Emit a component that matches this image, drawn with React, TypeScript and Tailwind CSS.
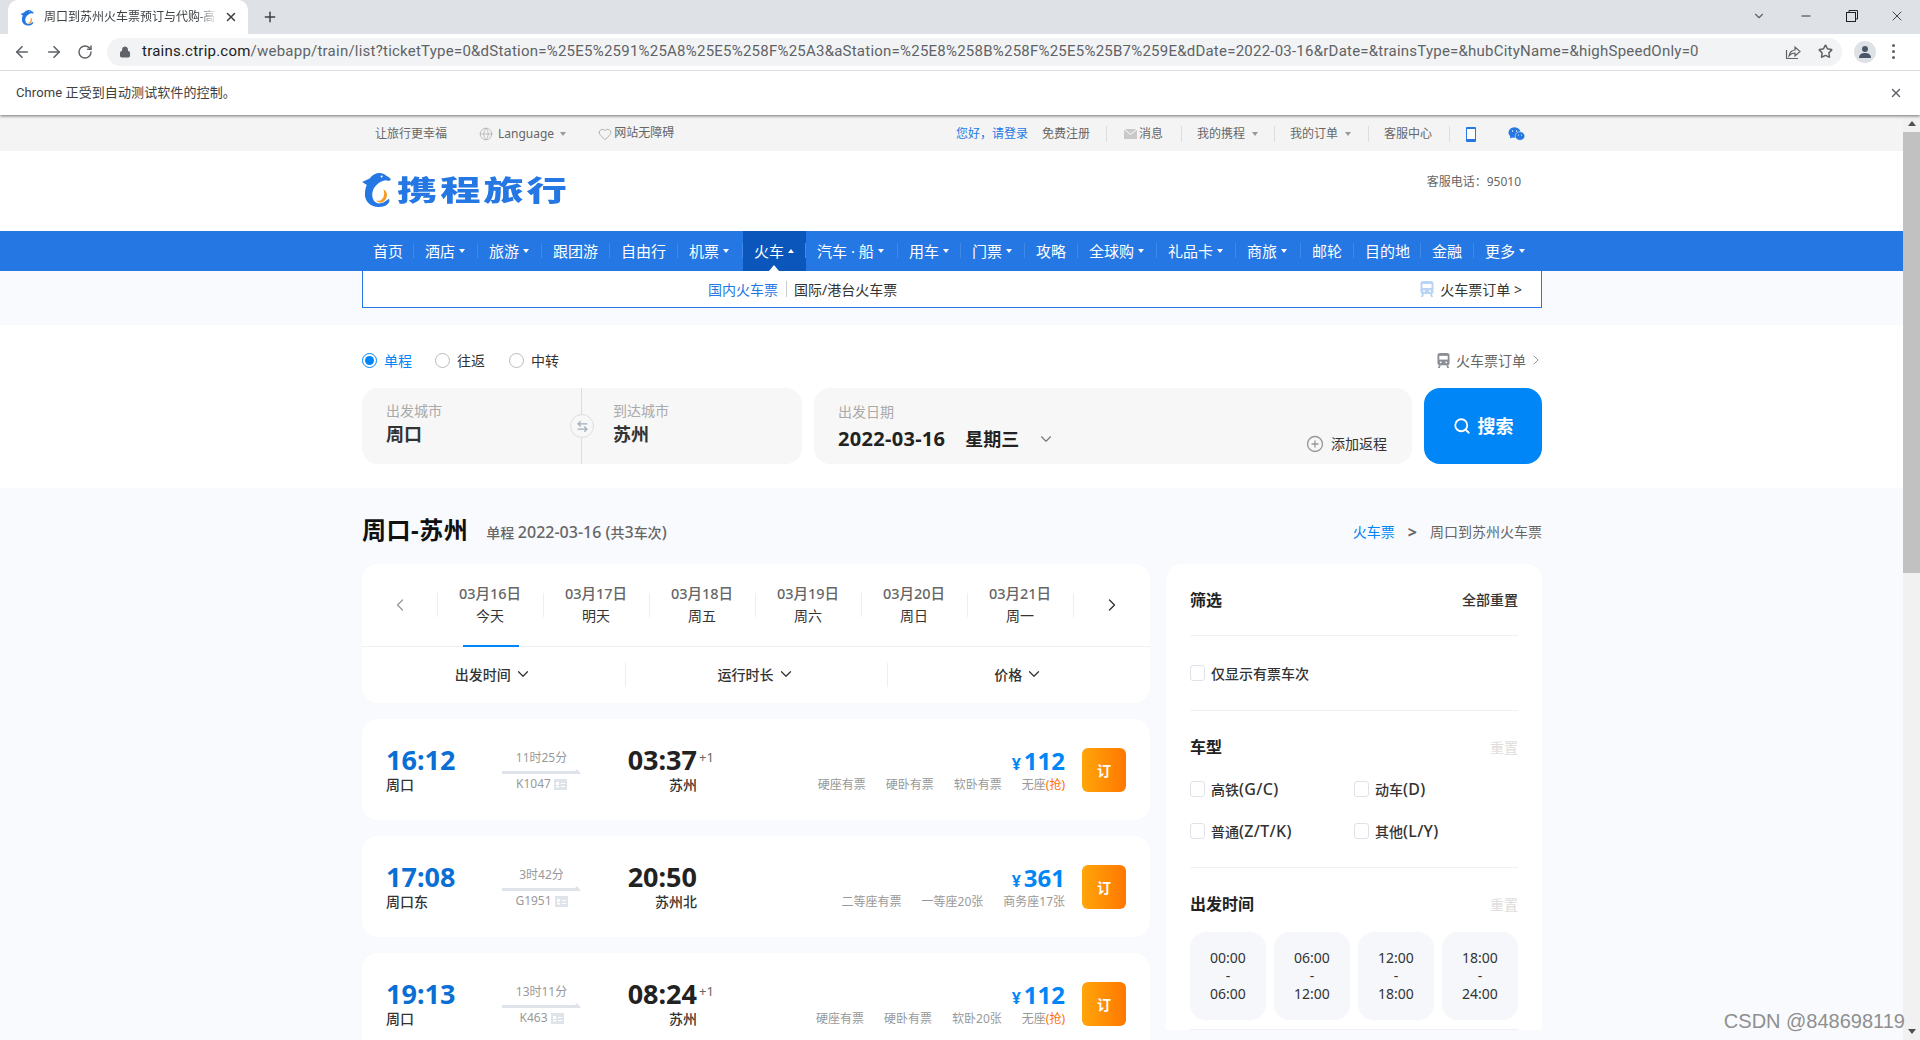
import React from 'react';
import { ArrowLeft, ArrowRight, RotateCw, Lock, Star, X, Plus, Minus, ChevronDown, ChevronLeft, ChevronRight, Globe, Search, ArrowLeftRight, CirclePlus, Heart } from 'lucide-react';

const tickets = [
  {
    from: '16:12', fromStation: '周口', duration: '11时25分', code: 'K1047', to: '03:37', toStation: '苏州', next: true, price: '112',
    seats: ['硬座有票', '硬卧有票', '软卧有票'], grab: true,
  },
  {
    from: '17:08', fromStation: '周口东', duration: '3时42分', code: 'G1951', to: '20:50', toStation: '苏州北', next: false, price: '361',
    seats: ['二等座有票', '一等座20张', '商务座17张'], grab: false,
  },
  {
    from: '19:13', fromStation: '周口', duration: '13时11分', code: 'K463', to: '08:24', toStation: '苏州', next: true, price: '112',
    seats: ['硬座有票', '硬卧有票', '软卧20张'], grab: true,
  },
];

const navItems = [
  { label: '首页', width: 'w-[52px]' },
  { label: '酒店', width: 'w-[64px]', caret: true },
  { label: '旅游', width: 'w-[64px]', caret: true },
  { label: '跟团游', width: 'w-[68px]' },
  { label: '自由行', width: 'w-[68px]' },
  { label: '机票', width: 'w-[65px]', caret: true },
  { label: '火车', width: 'w-[63px]', caret: true, active: true },
  { label: '汽车 · 船', width: 'w-[92px]', caret: true },
  { label: '用车', width: 'w-[63px]', caret: true },
  { label: '门票', width: 'w-[64px]', caret: true },
  { label: '攻略', width: 'w-[53px]' },
  { label: '全球购', width: 'w-[79px]', caret: true },
  { label: '礼品卡', width: 'w-[79px]', caret: true },
  { label: '商旅', width: 'w-[65px]', caret: true },
  { label: '邮轮', width: 'w-[53px]' },
  { label: '目的地', width: 'w-[67px]' },
  { label: '金融', width: 'w-[53px]' },
  { label: '更多', width: 'w-[68px]', caret: true },
];

const dates = [
  ['03月16日', '今天'],
  ['03月17日', '明天'],
  ['03月18日', '周五'],
  ['03月19日', '周六'],
  ['03月20日', '周日'],
  ['03月21日', '周一'],
];

function Dolphin({ className }: { className: string }) {
  return (
    <svg viewBox="4 3 32 40" className={className}>
      <path
        fill="#2577e3"
        d="M4 15 L12 11 C16 5 25 3 30 8 C32 9 34 10 35 12 C34 14 32 14 30 13 C25 13 19 17 16 23 C13 30 16 38 22 38 C27 38 30 35 33 33 C35 37 30 42 22 42 C13 42 6 35 7 27 C7 23 8 20 9 18 Z"
      />
      <circle cx="25" cy="9" r="1.1" fill="#fff" />
      <path fill="#f59a23" d="M27 23 C31 25 32 30 29 34 C26 38 21 38 19 35 C23 36 26 34 27 31 C28 28 28 26 27 23 Z" />
    </svg>
  );
}

function TrainIcon({ className, fill }: { className: string; fill: string }) {
  return (
    <svg viewBox="0 0 14 16" className={className}>
      <path fill={fill} d="M3 0 H11 C12.5 0 13.5 1 13.5 2.5 V11 C13.5 12 12.5 13 11.5 13 H2.5 C1.5 13 0.5 12 0.5 11 V2.5 C0.5 1 1.5 0 3 0 Z" />
      <rect x="2.5" y="3" width="9" height="4" fill="#fff" />
      <circle cx="4" cy="10" r="1" fill="#fff" />
      <circle cx="10" cy="10" r="1" fill="#fff" />
      <path fill={fill} d="M2 13 H4 L3 16 H1 Z M10 13 H12 L13 16 H11 Z" />
    </svg>
  );
}

function Caret({ color = 'border-t-[#999]' }: { color?: string }) {
  return <span className={`inline-block border-x-[3px] border-t-[4px] border-x-transparent ${color}`} />;
}

function BarSep({ className }: { className: string }) {
  return <span className={`h-[16px] w-px bg-[#dedede] ${className}`} />;
}

function BrowserChrome() {
  return (
    <div className="relative z-10 h-[115px] shrink-0 bg-white shadow-[0_1px_3px_rgba(0,0,0,0.55)] font-['Roboto','Noto_Sans_CJK_SC',sans-serif]">
      <div className="flex h-[34px] items-end bg-[#dee1e6] pl-2">
        <div className="flex h-[34px] w-[240px] items-center rounded-t-[10px] bg-white pl-3 text-[#3c4043]">
          <Dolphin className="h-[17px] w-[15px]" />
          <span className="ml-[9px] w-[174px] overflow-hidden whitespace-nowrap text-[12px] [mask-image:linear-gradient(to_right,black_88%,transparent)]">
            周口到苏州火车票预订与代购-高
          </span>
          <X className="ml-[6px] h-[14px] w-[14px]" strokeWidth={2.5} />
        </div>
        <Plus className="mb-[9px] ml-[14px] h-[16px] w-[16px] text-[#3c4043]" strokeWidth={2.2} />
        <div className="ml-auto mb-[10px] flex items-center text-[#202124]">
          <ChevronDown className="h-[14px] w-[14px] text-[#5f6368]" />
          <Minus className="ml-[33px] h-[14px] w-[14px]" strokeWidth={1.5} />
          <svg viewBox="0 0 12 12" className="ml-[33px] h-[12px] w-[12px]" fill="none" stroke="#202124" strokeWidth="1">
            <rect x="0.5" y="2.5" width="9" height="9" />
            <path d="M3 2.5 V0.5 H11.5 V9 H9.5" />
          </svg>
          <X className="ml-[31px] mr-[15px] h-[16px] w-[16px]" strokeWidth={1.2} />
        </div>
      </div>
      <div className="flex h-[37px] items-center border-b border-[#dadce0] pb-[1px]">
        <ArrowLeft className="ml-[13px] h-[18px] w-[18px] text-[#5f6368]" strokeWidth={2.2} />
        <ArrowRight className="ml-[14px] h-[18px] w-[18px] text-[#5f6368]" strokeWidth={2.2} />
        <RotateCw className="ml-[14px] h-[16px] w-[16px] text-[#5f6368]" strokeWidth={2.2} />
        <div className="ml-[14px] flex h-[28px] w-[1735px] items-center rounded-full bg-[#f1f3f4]">
          <Lock className="ml-[12px] h-[12px] w-[12px] fill-[#5f6368] text-[#5f6368]" />
          <span className="ml-[11px] whitespace-nowrap text-[15px] tracking-[0.23px] text-[#5f6368]">
            <span className="text-[#202124]">trains.ctrip.com</span>
            /webapp/train/list?ticketType=0&amp;dStation=%25E5%2591%25A8%25E5%258F%25A3&amp;aStation=%25E8%258B%258F%25E5%25B7%259E&amp;dDate=2022-03-16&amp;rDate=&amp;trainsType=&amp;hubCityName=&amp;highSpeedOnly=0
          </span>
          <svg viewBox="0 0 16 16" className="ml-auto h-[16px] w-[16px]" fill="none" stroke="#5f6368" strokeWidth="1.2">
            <path d="M1.5 6 V14.5 H13" />
            <path d="M4 12 C4.5 8 7.5 6 10 6 V3 L15 7.5 L10 12 V9 C7.5 9 5.5 10 4 12 Z" />
          </svg>
          <Star className="ml-[17px] mr-[9px] h-[15px] w-[15px] text-[#5f6368]" strokeWidth={2.4} />
        </div>
        <span className="ml-[12px] flex h-[22px] w-[22px] items-center justify-center rounded-full bg-[#dee1e6]">
          <svg viewBox="0 0 14 14" className="h-[14px] w-[14px]" fill="#4a5568">
            <circle cx="7" cy="4" r="3" />
            <path d="M1 13 C1 9 4 8 7 8 C10 8 13 9 13 13 Z" />
          </svg>
        </span>
        <span className="ml-[16px] flex flex-col gap-[3px]">
          <span className="h-[3px] w-[3px] rounded-full bg-[#5f6368]" />
          <span className="h-[3px] w-[3px] rounded-full bg-[#5f6368]" />
          <span className="h-[3px] w-[3px] rounded-full bg-[#5f6368]" />
        </span>
      </div>
      <div className="flex h-[44px] items-center pl-4 text-[13px] tracking-[0.1px] text-[#3c4043]">
        Chrome 正受到自动测试软件的控制。
        <X className="ml-auto mr-[17px] h-[14px] w-[14px] text-[#5f6368]" strokeWidth={2.5} />
      </div>
    </div>
  );
}

function TopBar() {
  return (
    <div className="h-[36px] bg-[#f4f4f4] pt-[2px] text-[12px] text-[#666]">
      <div className="ml-[362px] flex h-full w-[1180px] items-center">
        <span className="ml-[13px]">让旅行更幸福</span>
        <Globe className="ml-[32px] h-[14px] w-[14px] text-[#aaa]" strokeWidth={1.2} />
        <span className="ml-[5px]">Language</span>
        <span className="ml-[6px] flex"><Caret /></span>
        <Heart className="ml-[32px] h-[14px] w-[14px] text-[#aaa]" strokeWidth={1.5} />
        <span className="ml-[2px] -mt-[3px]">网站无障碍</span>
        <div className="ml-auto mr-[17px] flex items-center">
          <span className="text-[#2577e3]">您好，请登录</span>
          <span className="ml-[14px]">免费注册</span>
          <BarSep className="ml-[16px]" />
          <svg viewBox="0 0 13 10" className="ml-[17px] h-[10px] w-[13px]">
            <rect width="13" height="10" fill="#c9c9c9" />
            <path d="M0 0 L6.5 5.5 L13 0" fill="none" stroke="#fff" strokeWidth="1" />
          </svg>
          <span className="ml-[2px]">消息</span>
          <BarSep className="ml-[18px]" />
          <span className="ml-[15px]">我的携程</span>
          <span className="ml-[7px] flex"><Caret /></span>
          <BarSep className="ml-[16px]" />
          <span className="ml-[15px]">我的订单</span>
          <span className="ml-[7px] flex"><Caret /></span>
          <BarSep className="ml-[17px]" />
          <span className="ml-[15px]">客服中心</span>
          <BarSep className="ml-[17px]" />
          <svg viewBox="0 0 10 15" className="ml-[16px] h-[15px] w-[10px]">
            <rect width="10" height="15" rx="1" fill="#2577e3" />
            <rect x="1" y="2" width="8" height="10" fill="#fff" />
          </svg>
          <svg viewBox="0 0 17 14" className="ml-[32px] h-[14px] w-[17px]">
            <ellipse cx="6.5" cy="5.5" rx="6" ry="5.2" fill="#2577e3" />
            <path d="M2.5 8 L2 11.5 L6 9.5 Z" fill="#2577e3" />
            <ellipse cx="12" cy="9" rx="4.8" ry="4.3" fill="#2577e3" stroke="#f4f4f4" strokeWidth="0.6" />
            <circle cx="4.5" cy="4" r="0.7" fill="#fff" />
            <circle cx="8.5" cy="4" r="0.7" fill="#fff" />
            <circle cx="10.5" cy="8" r="0.6" fill="#fff" />
            <circle cx="13.5" cy="8" r="0.6" fill="#fff" />
          </svg>
        </div>
      </div>
    </div>
  );
}

function SiteHeader() {
  return (
    <div className="h-[80px] bg-white">
      <div className="ml-[362px] flex h-full w-[1180px] items-center">
        <Dolphin className="-mt-[4px] h-[37px] w-[30px]" />
        <span className="-mt-[2px] ml-[5px] origin-left scale-x-[1.44] whitespace-nowrap text-[28px] font-black leading-[36px] tracking-[2px] text-[#2577e3]">
          携程旅行
        </span>
        <span className="-mt-[18px] ml-auto mr-[21px] text-[12px] text-[#666]">客服电话：95010</span>
      </div>
    </div>
  );
}

function MainNav() {
  return (
    <div className="h-[40px] bg-[#2577e3]">
      <div className="ml-[362px] flex h-full w-[1180px]">
        {navItems.map(item => (
          <div
            key={item.label}
            className={`relative flex h-full shrink-0 items-center whitespace-nowrap pl-[11px] text-[15px] text-white after:absolute after:right-0 after:top-[12px] after:h-[15px] after:w-px after:bg-[#3f89e8] last:after:hidden ${item.width} ${item.active ? 'bg-[#0a56bb]' : ''}`}
          >
            {item.label}
            {item.caret && (
              item.active
                ? <span className="ml-[4px] border-x-[3px] border-b-[4px] border-x-transparent border-b-white" />
                : <span className="ml-[4px] border-x-[3px] border-t-[4px] border-x-transparent border-t-white" />
            )}
            {item.active && (
              <span className="absolute bottom-0 left-[26px] border-x-[5px] border-b-[6px] border-x-transparent border-b-white" />
            )}
          </div>
        ))}
      </div>
    </div>
  );
}

function SubNav() {
  return (
    <div className="h-[54px] bg-[#f8fafd]">
      <div className="ml-[362px] flex h-[37px] w-[1180px] items-center border-x border-b border-[#2577e3] bg-white pl-[345px] pr-[19px] text-[14px]">
        <span className="text-[#2577e3]">国内火车票</span>
        <span className="ml-[8px] h-[16px] w-px bg-[#ccc]" />
        <span className="ml-[7px] text-[#333]">国际/港台火车票</span>
        <TrainIcon className="ml-auto h-[16px] w-[14px]" fill="#b9d4f5" />
        <span className="ml-[6px] text-[#333]">火车票订单 &gt;</span>
      </div>
    </div>
  );
}

function RadioOption({ label, checked, className }: { label: string; checked?: boolean; className?: string }) {
  return (
    <div className={`flex items-center ${className ?? ''}`}>
      <span className={`flex h-[15px] w-[15px] items-center justify-center rounded-full border ${checked ? 'border-[#0086f6]' : 'border-[#bbb]'}`}>
        {checked && <span className="h-[9px] w-[9px] rounded-full bg-[#0086f6]" />}
      </span>
      <span className={`ml-[7px] text-[14px] ${checked ? 'text-[#0086f6]' : 'text-[#333]'}`}>{label}</span>
    </div>
  );
}

function SearchPanel() {
  return (
    <div className="bg-white pb-[24px] pt-[25px]">
      <div className="ml-[362px] w-[1180px]">
        <div className="flex h-[20px] items-center">
          <RadioOption label="单程" checked />
          <RadioOption label="往返" className="ml-[23px]" />
          <RadioOption label="中转" className="ml-[24px]" />
          <TrainIcon className="ml-auto h-[15px] w-[13px]" fill="#8a8f96" />
          <span className="ml-[6px] text-[14px] text-[#666]">火车票订单</span>
          <ChevronRight className="-mr-[2px] ml-[2px] h-[16px] w-[16px] text-[#999]" strokeWidth={1.5} />
        </div>
        <div className="mt-[18px] flex h-[76px] gap-3">
          <div className="relative flex w-[440px] rounded-2xl bg-[#f7f7f7]">
            <div className="h-full w-[220px] border-r border-[#ddd] pl-6 pt-3">
              <div className="text-[14px] leading-[22px] text-[#aaa]">出发城市</div>
              <div className="-mt-[1px] text-[18px] font-bold leading-[26px] text-[#333]">周口</div>
            </div>
            <div className="pl-[31px] pt-3">
              <div className="text-[14px] leading-[22px] text-[#aaa]">到达城市</div>
              <div className="-mt-[1px] text-[18px] font-bold leading-[26px] text-[#333]">苏州</div>
            </div>
            <span className="absolute left-[208px] top-[26px] flex h-[24px] w-[24px] items-center justify-center rounded-full border border-[#ddd] bg-[#f7f7f7]">
              <ArrowLeftRight className="h-[13px] w-[13px] text-[#a0acbb]" strokeWidth={2.4} />
            </span>
          </div>
          <div className="flex w-[598px] justify-between rounded-2xl bg-[#f7f7f7] pl-6 pr-[25px]">
            <div className="pt-[13px]">
              <div className="text-[14px] leading-[22px] text-[#aaa]">出发日期</div>
              <div className="mt-[3px] flex items-center text-[18px] font-bold leading-[26px] text-[#222]">
                <span className="text-[20px] tracking-[0.3px]">2022-03-16</span>
                <span className="ml-[20px] font-semibold">星期三</span>
                <ChevronDown className="ml-[18px] h-[18px] w-[18px] text-[#777]" strokeWidth={1.5} />
              </div>
            </div>
            <div className="mb-[10px] flex items-center self-end text-[14px] leading-[20px] text-[#333]">
              <CirclePlus className="h-[18px] w-[18px] text-[#999]" strokeWidth={1.8} />
              <span className="ml-[7px]">添加返程</span>
            </div>
          </div>
          <div className="flex w-[118px] items-center justify-center rounded-2xl bg-[#0086f6] text-white">
            <Search className="h-[18px] w-[18px]" strokeWidth={2.4} />
            <span className="ml-[7px] text-[18px] font-bold">搜索</span>
          </div>
        </div>
      </div>
    </div>
  );
}

function DateTabs() {
  return (
    <div className="overflow-hidden rounded-2xl bg-white">
      <div className="flex h-[83px] border-b border-[#eef0f4]">
        <div className="flex w-[75px] items-center justify-center">
          <ChevronLeft className="h-[20px] w-[20px] text-[#999]" strokeWidth={1.6} />
        </div>
        {dates.map(([date, day], i) => (
          <div
            key={date}
            className="relative h-full w-[106px] pt-[18px] text-center text-[14px] before:absolute before:left-0 before:top-[29px] before:h-[24px] before:w-px before:bg-[#eee]"
          >
            <div className="text-[14.5px] font-medium leading-[22px] text-[#666]">{date}</div>
            <div className="mt-[1px] leading-[22px] text-[#333]">{day}</div>
            {i === 0 && <span className="absolute bottom-[-1px] left-[26px] h-[2px] w-[56px] bg-[#0086f6]" />}
          </div>
        ))}
        <div className="relative flex flex-1 items-center justify-center before:absolute before:left-0 before:top-[29px] before:h-[24px] before:w-px before:bg-[#eee]">
          <ChevronRight className="h-[20px] w-[20px] text-[#333]" strokeWidth={1.6} />
        </div>
      </div>
      <div className="flex h-[56px]">
        {['出发时间', '运行时长', '价格'].map((label, i) => (
          <div
            key={label}
            className={`relative flex flex-1 items-center justify-center pb-[2px] text-[14px] font-medium text-[#333] ${i > 0 ? "before:absolute before:left-0 before:top-[16px] before:h-[24px] before:w-px before:bg-[#eee]" : ''}`}
          >
            {label}
            <ChevronDown className="ml-[3px] h-[18px] w-[18px] text-[#333]" strokeWidth={1.6} />
          </div>
        ))}
      </div>
    </div>
  );
}

function TicketCard({ ticket }: { ticket: (typeof tickets)[number] }) {
  return (
    <div className="flex h-[101px] shrink-0 items-start rounded-2xl bg-white pt-[26px]">
      <div className="w-[140px] pl-[24px]">
        <div className="text-[27px] font-bold leading-[30px] text-[#0a6fd4]">{ticket.from}</div>
        <div className="text-[14px] font-medium leading-[20px] text-[#333]">{ticket.fromStation}</div>
      </div>
      <div className="w-[79px] pt-[4px] text-center text-[12px] text-[#999]">
        <div className="leading-[18px]">{ticket.duration}</div>
        <svg viewBox="0 0 79 5" className="mt-[2px] block h-[5px] w-[79px]">
          <polygon points="0,2 73,2 75,0 79,5 0,5" fill="#dfe4ea" />
        </svg>
        <div className="mt-[1px] flex items-center justify-center leading-[18px]">
          {ticket.code}
          <svg viewBox="0 0 13 11" className="ml-[3px] h-[11px] w-[13px]">
            <rect width="13" height="11" fill="#dfe4ea" />
            <rect x="2" y="3" width="3" height="3" fill="#fff" />
            <rect x="2" y="7" width="3" height="1.5" fill="#fff" />
            <rect x="7" y="4" width="4" height="1" fill="#fff" />
            <rect x="7" y="7" width="4" height="1" fill="#fff" />
          </svg>
        </div>
      </div>
      <div className="w-[116px] text-right">
        <div className="relative text-[27px] font-bold leading-[30px] text-[#222]">
          {ticket.to}
          {ticket.next && <span className="absolute left-[118px] top-[3px] text-[13px] font-normal leading-[18px] text-[#666]">+1</span>}
        </div>
        <div className="text-[14px] font-medium leading-[20px] text-[#333]">{ticket.toStation}</div>
      </div>
      <div className="flex-1 pr-[17px] text-right">
        <div className="mt-[1px] text-[24px] font-bold leading-[30px] text-[#0086f6]">
          <span className="mr-[3px] text-[16px]">¥</span>{ticket.price}
        </div>
        <div className="-mt-[3px] flex justify-end gap-5 text-[12px] leading-[18px] text-[#999]">
          {ticket.seats.map(seat => <span key={seat}>{seat}</span>)}
          {ticket.grab && <span>无座<span className="text-[#ff6f00]">(抢)</span></span>}
        </div>
      </div>
      <div className="mr-6 mt-[3px] flex h-[44px] w-[44px] shrink-0 items-center justify-center rounded-md bg-gradient-to-r from-[#ffa50a] to-[#ff7700] text-[14px] font-bold text-white">
        订
      </div>
    </div>
  );
}

function Checkbox({ label, latin, className }: { label: string; latin?: string; className?: string }) {
  return (
    <div className={`flex items-center ${className ?? ''}`}>
      <span className="h-[16px] w-[15px] rounded-[3px] border border-[#dfe2e8] bg-white" />
      <span className="ml-[6px] text-[14px] font-medium text-[#333]">
        {label}
        {latin && <span className="text-[16px] tracking-[0.3px]">{latin}</span>}
      </span>
    </div>
  );
}

function FilterPanel() {
  return (
    <div className="w-[376px] shrink-0 self-start rounded-t-2xl bg-white px-6">
      <div className="flex h-[72px] items-center justify-between border-b border-[#eef0f4]">
        <span className="text-[16px] font-semibold text-[#222]">筛选</span>
        <span className="text-[14px] font-medium text-[#333]">全部重置</span>
      </div>
      <div className="flex h-[75px] items-center border-b border-[#eef0f4]">
        <Checkbox label="仅显示有票车次" />
      </div>
      <div className="border-b border-[#eef0f4] pb-[15px] pt-[24px]">
        <div className="flex h-[24px] items-center justify-between">
          <span className="text-[16px] font-semibold text-[#222]">车型</span>
          <span className="text-[14px] text-[#ddd]">重置</span>
        </div>
        <div className="mt-[9px] grid grid-cols-[164px_1fr] auto-rows-[42px] items-center">
          <Checkbox label="高铁" latin="(G/C)" />
          <Checkbox label="动车" latin="(D)" />
          <Checkbox label="普通" latin="(Z/T/K)" />
          <Checkbox label="其他" latin="(L/Y)" />
        </div>
      </div>
      <div className="border-b border-[#eef0f4] pb-[9px] pt-[24px]">
        <div className="flex h-[24px] items-center justify-between">
          <span className="text-[16px] font-semibold text-[#222]">出发时间</span>
          <span className="text-[14px] text-[#ddd]">重置</span>
        </div>
        <div className="mt-4 grid grid-cols-4 gap-2">
          {[['00:00', '06:00'], ['06:00', '12:00'], ['12:00', '18:00'], ['18:00', '24:00']].map(([start, end]) => (
            <div key={start} className="flex h-[88px] flex-col items-center justify-center rounded-2xl bg-[#f5f7fa] text-[14px] leading-[18px] text-[#333]">
              <span>{start}</span>
              <span>-</span>
              <span>{end}</span>
            </div>
          ))}
        </div>
      </div>
    </div>
  );
}

function ResultArea() {
  return (
    <div className="bg-[#f8fafd] pt-[26px]">
      <div className="ml-[362px] w-[1180px]">
        <div className="flex h-[32px] items-center">
          <h1 className="text-[24px] font-bold tracking-[0.5px] text-[#111]">周口-苏州</h1>
          <span className="ml-[18px] mt-[3px] text-[14px] font-medium text-[#666]">
            单程 <span className="text-[16px]">2022-03-16 (</span>共<span className="text-[16px]">3</span>车次<span className="text-[16px]">)</span>
          </span>
          <span className="ml-auto mt-[3px] text-[14px] text-[#0086f6]">火车票</span>
          <span className="ml-[13px] mt-[3px] text-[16px] font-bold text-[#666]">&gt;</span>
          <span className="ml-[13px] mt-[3px] text-[14px] text-[#666]">周口到苏州火车票</span>
        </div>
        <div className="mt-[18px] flex gap-4">
          <div className="flex w-[788px] shrink-0 flex-col gap-4">
            <DateTabs />
            {tickets.map(ticket => <TicketCard key={ticket.code} ticket={ticket} />)}
          </div>
          <FilterPanel />
        </div>
      </div>
    </div>
  );
}

function Scrollbar() {
  return (
    <div className="flex w-[17px] shrink-0 flex-col items-center bg-[#f1f1f1]">
      <span className="mt-[6px] border-x-[4px] border-b-[5px] border-x-transparent border-b-[#505050]" />
      <span className="mt-[6px] h-[441px] w-full bg-[#c1c1c1]" />
      <span className="mt-auto mb-[6px] border-x-[4px] border-t-[5px] border-x-transparent border-t-[#505050]" />
    </div>
  );
}

export default function App() {
  return (
    <div className="relative flex h-[1040px] w-[1920px] flex-col overflow-hidden bg-white font-['Noto_Sans','Noto_Sans_CJK_SC',sans-serif]">
      <BrowserChrome />
      <div className="flex min-h-0 flex-1">
        <div className="min-w-0 flex-1 overflow-hidden">
          <TopBar />
          <SiteHeader />
          <MainNav />
          <SubNav />
          <SearchPanel />
          <ResultArea />
        </div>
        <Scrollbar />
      </div>
      <span className="absolute bottom-[4px] right-[15px] font-['Liberation_Sans',sans-serif] text-[20px] text-[#8f8f8f]">
        CSDN @848698119
      </span>
    </div>
  );
}
